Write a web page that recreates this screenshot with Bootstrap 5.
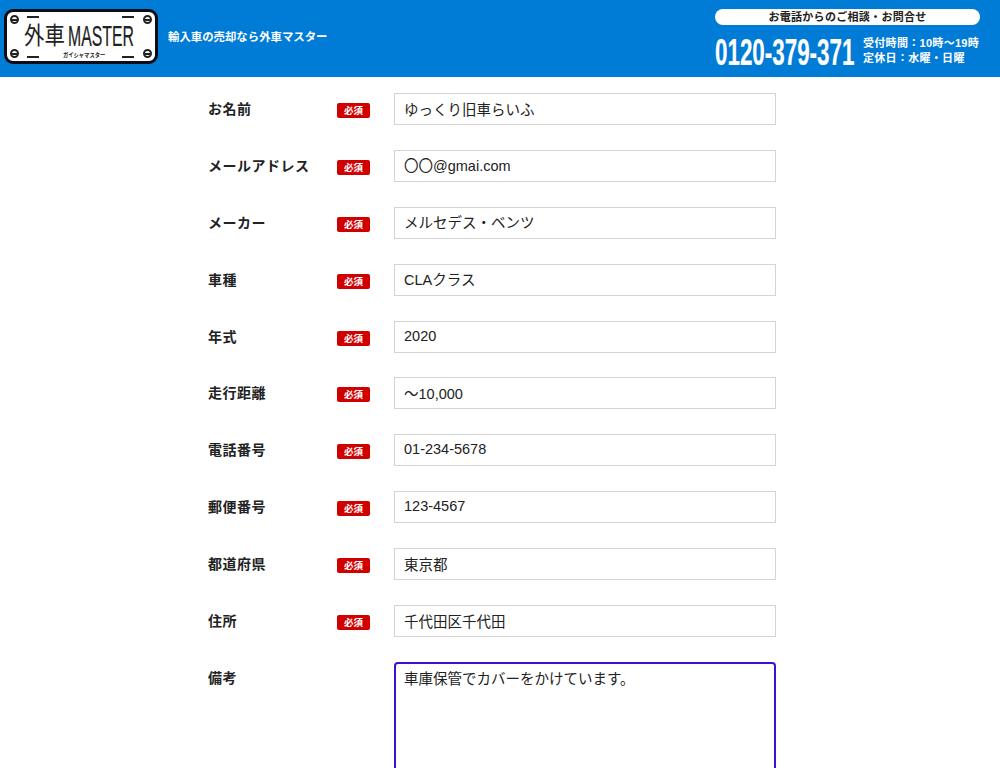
<!DOCTYPE html>
<html lang="ja">

<head>
    <meta charset="UTF-8">
    <meta name="viewport" content="width=device-width, initial-scale=1.0">
    <title>外車MASTER</title>
    <link href="https://cdn.jsdelivr.net/npm/bootstrap@5.3.0/dist/css/bootstrap.min.css" rel="stylesheet">
    <style>
        html, body { overflow: hidden; height: 768px; }
        body { font-family: "Liberation Sans", "Noto Sans CJK JP", sans-serif; color: #222; }
        .site-head { height: 77px; background: #007cd6; color: #fff; padding: 9px 20px 0 4px; }
        .plate { position: relative; width: 154px; height: 55px; background: #fff; border: 3.5px solid #0c0c14; border-radius: 9px; flex-shrink: 0; }
        .plate-bolt { position: absolute; width: 9px; height: 9px; border: 2px solid #222; border-radius: 50%; }
        .plate-bolt::after { content: ""; position: absolute; left: 0; right: 0; top: 1.5px; height: 2px; background: #222; }
        .bolt-tl { left: 3px; top: 3px; }
        .bolt-tr { right: 3px; top: 3px; }
        .bolt-bl { left: 3px; bottom: 3px; }
        .bolt-br { right: 3px; bottom: 3px; }
        .plate-dash { position: absolute; height: 2px; width: 12px; background: #222; }
        .dash-a { left: 19.5px; top: 3.5px; }
        .dash-b { right: 21px; top: 3.5px; }
        .dash-c { left: 19.5px; bottom: 3.5px; }
        .dash-d { right: 21px; bottom: 3.5px; }
        .plate-cars { position: absolute; left: 17px; top: 9px; font-size: 24px; line-height: 30px; white-space: nowrap; color: #222; transform: scaleX(.85); transform-origin: left center; }
        .plate-word { position: absolute; left: 60.5px; top: 8px; font-size: 29px; line-height: 32px; white-space: nowrap; color: #222; -webkit-text-stroke: .2px #222; transform: scaleX(.545); transform-origin: left center; }
        .plate-kana { position: absolute; left: 56px; bottom: 2px; font-size: 6px; line-height: 8px; font-weight: 700; color: #222; white-space: nowrap; transform: scaleX(.88); transform-origin: left center; }
        .head-copy { font-size: 11.4px; font-weight: 700; margin: 0 0 0 10px; padding-top: 20px; }
        .head-right { width: 265px; }
        .tel-pill { background: #fff; color: #222; border-radius: 8px; height: 16px; line-height: 16px; font-size: 11px; font-weight: 700; text-align: center; letter-spacing: .3px; }
        .tel-row { margin-top: 11px; }
        .tel-num { width: 148px; height: 34px; font-size: 37px; line-height: 34px; font-weight: 700; white-space: nowrap; -webkit-text-stroke: .2px #fff; transform: scaleX(.605); transform-origin: left center; }
        .tel-info { font-size: 11px; line-height: 14.5px; font-weight: 700; white-space: nowrap; letter-spacing: .3px; }
        .entry-form { width: 568px; margin: 16px 0 0 208px; }
        .entry-row { height: 32px; margin-bottom: 24.9px; }
        .entry-label { width: 129px; font-size: 14px; font-weight: 700; margin: 0; line-height: 32px; color: #222; letter-spacing: .5px; flex-shrink: 0; }
        .need-tag { width: 33px; height: 15px; margin: 10px 24px 0 0; background: #d10000; color: #fff; border-radius: 2px; font-size: 9.5px; line-height: 15px; font-weight: 700; text-align: center; flex-shrink: 0; }
        .no-tag { width: 57px; flex-shrink: 0; }
        .form-control.entry-input { width: 382px; height: 32px; border: 1px solid #d4d4d4; border-radius: 0; padding: 0 9px 2px 9px; font-size: 14.5px; color: #222; box-shadow: none; }
        .form-control.entry-note { width: 382px; height: 200px; border: 2px solid #3d0fd6; border-radius: 4px; padding: 5px 8px; font-size: 14.5px; line-height: 21px; color: #222; box-shadow: none; resize: none; }
    </style>
</head>

<body>
    <header class="site-head d-flex justify-content-between">
        <div class="d-flex">
            <div class="plate">
                <i class="plate-bolt bolt-tl"></i><i class="plate-bolt bolt-tr"></i><i class="plate-bolt bolt-bl"></i><i class="plate-bolt bolt-br"></i>
                <i class="plate-dash dash-a"></i><i class="plate-dash dash-b"></i><i class="plate-dash dash-c"></i><i class="plate-dash dash-d"></i>
                <div class="plate-cars">外車</div>
                <div class="plate-word">MASTER</div>
                <div class="plate-kana">ガイシャマスター</div>
            </div>
            <p class="head-copy">輸入車の売却なら外車マスター</p>
        </div>
        <div class="head-right">
            <div class="tel-pill">お電話からのご相談・お問合せ</div>
            <div class="tel-row d-flex">
                <div class="tel-num">0120-379-371</div>
                <div class="tel-info">受付時間：10時～19時<br>定休日：水曜・日曜</div>
            </div>
        </div>
    </header>

    <form class="entry-form">
        <div class="entry-row d-flex">
            <label class="entry-label">お名前</label><span class="need-tag">必須</span>
            <input type="text" class="form-control entry-input" value="ゆっくり旧車らいふ">
        </div>
        <div class="entry-row d-flex">
            <label class="entry-label">メールアドレス</label><span class="need-tag">必須</span>
            <input type="text" class="form-control entry-input" value="〇〇@gmai.com">
        </div>
        <div class="entry-row d-flex">
            <label class="entry-label">メーカー</label><span class="need-tag">必須</span>
            <input type="text" class="form-control entry-input" value="メルセデス・ベンツ">
        </div>
        <div class="entry-row d-flex">
            <label class="entry-label">車種</label><span class="need-tag">必須</span>
            <input type="text" class="form-control entry-input" value="CLAクラス">
        </div>
        <div class="entry-row d-flex">
            <label class="entry-label">年式</label><span class="need-tag">必須</span>
            <input type="text" class="form-control entry-input" value="2020">
        </div>
        <div class="entry-row d-flex">
            <label class="entry-label">走行距離</label><span class="need-tag">必須</span>
            <input type="text" class="form-control entry-input" value="～10,000">
        </div>
        <div class="entry-row d-flex">
            <label class="entry-label">電話番号</label><span class="need-tag">必須</span>
            <input type="text" class="form-control entry-input" value="01-234-5678">
        </div>
        <div class="entry-row d-flex">
            <label class="entry-label">郵便番号</label><span class="need-tag">必須</span>
            <input type="text" class="form-control entry-input" value="123-4567">
        </div>
        <div class="entry-row d-flex">
            <label class="entry-label">都道府県</label><span class="need-tag">必須</span>
            <input type="text" class="form-control entry-input" value="東京都">
        </div>
        <div class="entry-row d-flex">
            <label class="entry-label">住所</label><span class="need-tag">必須</span>
            <input type="text" class="form-control entry-input" value="千代田区千代田">
        </div>
        <div class="d-flex">
            <label class="entry-label">備考</label><span class="no-tag"></span>
            <textarea class="form-control entry-note">車庫保管でカバーをかけています。</textarea>
        </div>
    </form>

    <script src="https://cdn.jsdelivr.net/npm/bootstrap@5.3.0/dist/js/bootstrap.bundle.min.js"></script>
</body>

</html>
